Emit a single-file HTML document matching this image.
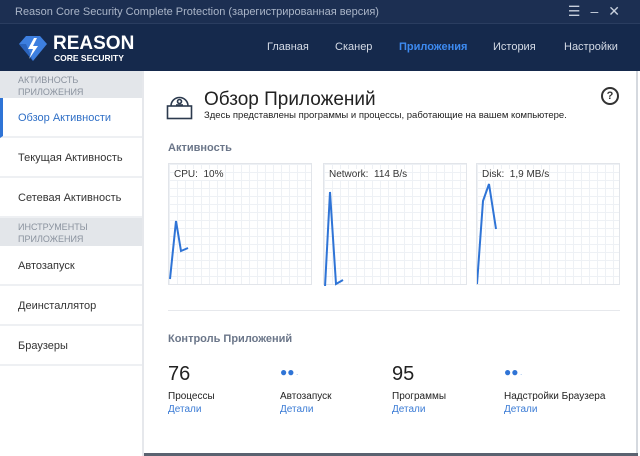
<!DOCTYPE html>
<html><head><meta charset="utf-8"><style>
*{margin:0;padding:0;box-sizing:border-box}
body{width:640px;height:456px;overflow:hidden;font-family:"Liberation Sans","Noto Sans CJK SC",sans-serif;background:#fff;position:relative}
.tb{position:absolute;left:0;top:0;width:640px;height:24px;background:#1c2f52;color:#aab5c8;font-size:11px;line-height:24px;padding-left:15px;border-bottom:1px solid #2a3d60}
.hd{position:absolute;left:0;top:24px;width:640px;height:47px;background:#15294c}
.nav{position:absolute;top:41px;font-size:11px;color:#d5dbe6}
.sb{position:absolute;left:0;top:71px;width:144px;height:385px;background:#fff;border-right:2px solid #e6e8ec}
.sh{background:#e3e6ea;color:#8a929e;font-size:9px;line-height:12px;padding:3px 18px;height:27px}
.it{height:40px;border-bottom:2px solid #eef0f3;font-size:11px;color:#333;line-height:40px;padding-left:18px}
.box{position:absolute;top:163px;height:122px;border:1px solid #e2e5ea;background-color:#fff;background-image:linear-gradient(#eef1f5 1px,transparent 1px),linear-gradient(90deg,#eef1f5 1px,transparent 1px);background-size:8px 8px}
.box span{position:absolute;left:5px;top:5px;font-size:10px;color:#333;background:#fff}
.box svg{position:absolute;left:0;top:0}
.st{position:absolute;font-size:10px;color:#222}
.st b{display:block;font-weight:normal;font-size:20px;height:28px}
.st i{display:block;font-style:normal;color:#3a7bd5;font-size:10px;margin-top:2px}
.dots{display:block;height:28px;padding-top:2px}
</style></head><body>
<div class="tb">Reason Core Security Complete Protection (зарегистрированная версия)</div>
<div style="position:absolute;right:10px;top:3px;color:#c8d0dd;font-size:14px;letter-spacing:10px">☰–✕</div>
<div class="hd"></div>
<svg style="position:absolute;left:16px;top:34px" width="32" height="28" viewBox="0 0 32 28"><polygon points="3,10 10,2 24,2 31,10 17,27" fill="#3d7fe0"/><polygon points="3,10 17,27 10,10" fill="#2a63bd"/><path d="M18 4 L12 15 L17 15 L13 25 L22 12 L17 12 L21 4Z" fill="#fff"/></svg>
<div style="position:absolute;left:53px;top:34px;color:#fff;font-weight:bold;font-size:19px;line-height:20px">REASON</div>
<div style="position:absolute;left:54px;top:53px;color:#fff;font-weight:bold;font-size:8.5px">CORE SECURITY</div>
<div class="nav" style="left:267px">Главная</div>
<div class="nav" style="left:335px">Сканер</div>
<div class="nav" style="left:399px;color:#3d8af0;font-weight:bold">Приложения</div>
<div class="nav" style="left:493px">История</div>
<div class="nav" style="left:564px">Настройки</div>
<div class="sb">
<div class="sh">АКТИВНОСТЬ<br>ПРИЛОЖЕНИЯ</div>
<div class="it" style="color:#2f6fc6;border-left:3px solid #2f74d6;padding-left:15px">Обзор Активности</div>
<div class="it">Текущая Активность</div>
<div class="it">Сетевая Активность</div>
<div class="sh" style="height:28px">ИНСТРУМЕНТЫ<br>ПРИЛОЖЕНИЯ</div>
<div class="it">Автозапуск</div>
<div class="it">Деинсталлятор</div>
<div class="it">Браузеры</div>
</div>
<div style="position:absolute;left:636px;top:71px;width:2px;height:385px;background:#d5d9df"></div>
<div style="position:absolute;left:144px;top:453px;width:494px;height:3px;background:#5a6270"></div>
<svg style="position:absolute;left:166px;top:93px" width="27" height="27" viewBox="0 0 27 27" fill="none" stroke="#2c3a4e" stroke-width="1.6"><path d="M5 13 A8.5 8.5 0 0 1 22 13"/><rect x="1.5" y="13" width="24" height="12.5"/><circle cx="13.5" cy="8.5" r="2"/><line x1="10" y1="12" x2="17" y2="12"/></svg>
<div style="position:absolute;left:204px;top:89px;font-size:19px;color:#222">Обзор Приложений</div>
<div style="position:absolute;left:204px;top:110px;font-size:9.5px;color:#222">Здесь представлены программы и процессы, работающие на вашем компьютере.</div>
<div style="position:absolute;left:601px;top:87px;width:18px;height:18px;border:2px solid #333;border-radius:50%;font-size:11px;font-weight:bold;text-align:center;line-height:14px;color:#333">?</div>
<div style="position:absolute;left:168px;top:142px;font-size:11px;font-weight:bold;color:#6b7689">Активность</div>
<div class="box" style="left:168px;width:144px"><svg width="144" height="122"><polyline points="1,115 7,57 12,87 19,84" fill="none" stroke="#2f74d6" stroke-width="2"/></svg><span>CPU:&nbsp; 10%</span></div>
<div class="box" style="left:323px;width:144px"><svg width="144" height="122"><polyline points="1,123 6,28 12,120 19,116" fill="none" stroke="#2f74d6" stroke-width="2"/></svg><span>Network:&nbsp; 114 B/s</span></div>
<div class="box" style="left:476px;width:144px"><svg width="144" height="122"><polyline points="0,120 6,37 12,20 19,65" fill="none" stroke="#2f74d6" stroke-width="2"/></svg><span>Disk:&nbsp; 1,9 MB/s</span></div>
<div style="position:absolute;left:168px;top:310px;width:452px;height:1px;background:#e6e8ec"></div>
<div style="position:absolute;left:168px;top:333px;font-size:11px;font-weight:bold;color:#6b7689">Контроль Приложений</div>
<div class="st" style="left:168px;top:363px"><b>76</b>Процессы<i>Детали</i></div>
<div class="st" style="left:280px;top:363px"><span class="dots"><span style="color:#2f74d6;font-size:12px">●●</span><span style="font-size:6px;color:#2f74d6"> ·</span></span>Автозапуск<i>Детали</i></div>
<div class="st" style="left:392px;top:363px"><b>95</b>Программы<i>Детали</i></div>
<div class="st" style="left:504px;top:363px"><span class="dots"><span style="color:#2f74d6;font-size:12px">●●</span><span style="font-size:6px;color:#2f74d6"> ·</span></span>Надстройки Браузера<i>Детали</i></div>
</body></html>
